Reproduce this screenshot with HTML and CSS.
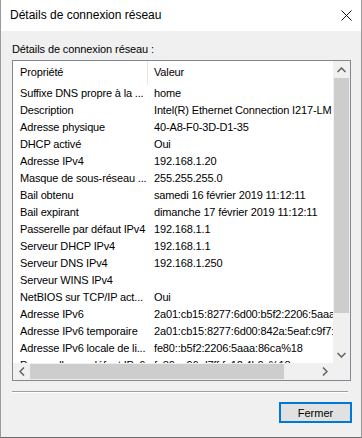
FILE: index.html
```html
<!DOCTYPE html>
<html lang="fr">

<head>
    <meta charset="utf-8">
    <title>Détails de connexion réseau</title>
    <link rel="stylesheet" href="styles.css">
</head>

<body>

    <div class="fenetre">
        <div class="titre">
            <span class="titreTexte">Détails de connexion réseau</span>
            <svg class="fermerX" width="11" height="11" viewBox="0 0 11 11">
                <path d="M0.5 0.5 L10.5 10.5 M10.5 0.5 L0.5 10.5" stroke="#111" stroke-width="1" fill="none"/>
            </svg>
        </div>

        <div class="contenu">
            <div class="etiquette">Détails de connexion réseau :</div>

            <div class="liste">
                <div class="zone">
                    <div class="ligne entete">
                        <div class="col1">Propriété</div>
                        <div class="col2">Valeur</div>
                    </div>
                    <div class="ligne"><div class="col1">Suffixe DNS propre à la ...</div><div class="col2">home</div></div>
                    <div class="ligne"><div class="col1">Description</div><div class="col2">Intel(R) Ethernet Connection I217-LM</div></div>
                    <div class="ligne"><div class="col1">Adresse physique</div><div class="col2">40-A8-F0-3D-D1-35</div></div>
                    <div class="ligne"><div class="col1">DHCP activé</div><div class="col2">Oui</div></div>
                    <div class="ligne"><div class="col1">Adresse IPv4</div><div class="col2">192.168.1.20</div></div>
                    <div class="ligne"><div class="col1">Masque de sous-réseau ...</div><div class="col2">255.255.255.0</div></div>
                    <div class="ligne"><div class="col1">Bail obtenu</div><div class="col2">samedi 16 février 2019 11:12:11</div></div>
                    <div class="ligne"><div class="col1">Bail expirant</div><div class="col2">dimanche 17 février 2019 11:12:11</div></div>
                    <div class="ligne"><div class="col1">Passerelle par défaut IPv4</div><div class="col2">192.168.1.1</div></div>
                    <div class="ligne"><div class="col1">Serveur DHCP IPv4</div><div class="col2">192.168.1.1</div></div>
                    <div class="ligne"><div class="col1">Serveur DNS IPv4</div><div class="col2">192.168.1.250</div></div>
                    <div class="ligne"><div class="col1">Serveur WINS IPv4</div><div class="col2"></div></div>
                    <div class="ligne"><div class="col1">NetBIOS sur TCP/IP act...</div><div class="col2">Oui</div></div>
                    <div class="ligne"><div class="col1">Adresse IPv6</div><div class="col2">2a01:cb15:8277:6d00:b5f2:2206:5aaa:86ca</div></div>
                    <div class="ligne"><div class="col1">Adresse IPv6 temporaire</div><div class="col2">2a01:cb15:8277:6d00:842a:5eaf:c9f7:1d2e</div></div>
                    <div class="ligne"><div class="col1">Adresse IPv6 locale de li...</div><div class="col2">fe80::b5f2:2206:5aaa:86ca%18</div></div>
                    <div class="ligne"><div class="col1">Passerelle par défaut IPv6</div><div class="col2">fe80::a96:d7ff:fe12:4b0c%18</div></div>
                </div>

                <div class="defilV">
                    <div class="fleche">
                        <svg width="9" height="6" viewBox="0 0 9 6"><path d="M0.5 5 L4.5 1 L8.5 5" stroke="#606060" stroke-width="1.5" fill="none"/></svg>
                    </div>
                    <div class="piste"><div class="curseurV"></div></div>
                    <div class="fleche">
                        <svg width="9" height="6" viewBox="0 0 9 6"><path d="M0.5 1 L4.5 5 L8.5 1" stroke="#606060" stroke-width="1.5" fill="none"/></svg>
                    </div>
                </div>

                <div class="defilH">
                    <div class="fleche">
                        <svg width="6" height="9" viewBox="0 0 6 9"><path d="M5 0.5 L1 4.5 L5 8.5" stroke="#606060" stroke-width="1.5" fill="none"/></svg>
                    </div>
                    <div class="piste"><div class="curseurH"></div></div>
                    <div class="fleche">
                        <svg width="6" height="9" viewBox="0 0 6 9"><path d="M1 0.5 L5 4.5 L1 8.5" stroke="#606060" stroke-width="1.5" fill="none"/></svg>
                    </div>
                </div>

                <div class="coin"></div>
            </div>

            <div class="separateur"></div>

            <div class="boutons">
                <button class="fermer">Fermer</button>
            </div>
        </div>
    </div>

</body>

</html>
```

FILE: styles.css
```css
body {
    margin: 0;
    background-color: #f0f0f0;
    font-family: 'Liberation Sans', Arial, sans-serif;
    font-size: 11px;
    color: #000;
}

.fenetre {
    width: 362px;
    height: 438px;
    box-sizing: border-box;
    border-left: 1px solid #9a9a9a;
    border-right: 1px solid #9a9a9a;
    border-bottom: 1px solid #6a6a6a;
    background-color: #f0f0f0;
    display: flex;
    flex-direction: column;
}

.titre {
    height: 31px;
    background-color: #fff;
    display: flex;
    align-items: center;
    justify-content: space-between;
    padding: 0 9px 0 9px;
}

.titreTexte {
    font-size: 12px;
    padding-bottom: 2px;
}

.fermerX {
    margin-top: -1px;
}

.contenu {
    padding: 11px 10px 0 11px;
}

.etiquette {
    height: 18px;
    line-height: 14px;
    letter-spacing: -0.1px;
}

.liste {
    width: 339px;
    height: 321px;
    box-sizing: border-box;
    border: 1px solid #828790;
    display: grid;
    grid-template-columns: 320px 17px;
    grid-template-rows: 302px 17px;
    background-color: #f0f0f0;
}

.zone {
    background-color: #fff;
    overflow: hidden;
    letter-spacing: -0.15px;
}

.ligne {
    display: flex;
    height: 17px;
    line-height: 17px;
    white-space: nowrap;
}

.entete {
    height: 24px;
    line-height: 23px;
}

.col1 {
    width: 127px;
    flex-shrink: 0;
    padding-left: 7px;
    overflow: hidden;
}

.col2 {
    padding-left: 7px;
}

.entete .col1 {
    border-right: 1px solid #e5e5e5;
}

.entete .col2 {
    padding-left: 6px;
}

.defilV {
    display: flex;
    flex-direction: column;
}

.defilH {
    display: flex;
}

.fleche {
    width: 17px;
    height: 17px;
    display: flex;
    align-items: center;
    justify-content: center;
    flex-shrink: 0;
}

.defilV .piste {
    flex: 1;
}

.curseurV {
    margin-left: 1px;
    width: 15px;
    height: 235px;
    background-color: #cdcdcd;
}

.defilH .piste {
    flex: 1;
}

.curseurH {
    margin-top: 1px;
    width: 254px;
    height: 15px;
    background-color: #cdcdcd;
}

.coin {
    background-color: #f0f0f0;
}

.separateur {
    width: 336px;
    height: 1px;
    margin-top: 10px;
    background-color: #a0a0a0;
    border-bottom: 1px solid #fff;
}

.boutons {
    display: flex;
    justify-content: flex-end;
    padding-top: 9px;
    padding-right: 0;
}

.fermer {
    width: 73px;
    height: 21px;
    box-sizing: border-box;
    border: 2px solid #0078d7;
    background-color: #e1e1e1;
    font-family: 'Liberation Sans', Arial, sans-serif;
    font-size: 11px;
    padding: 0;
    margin-right: -1px;
}
```
